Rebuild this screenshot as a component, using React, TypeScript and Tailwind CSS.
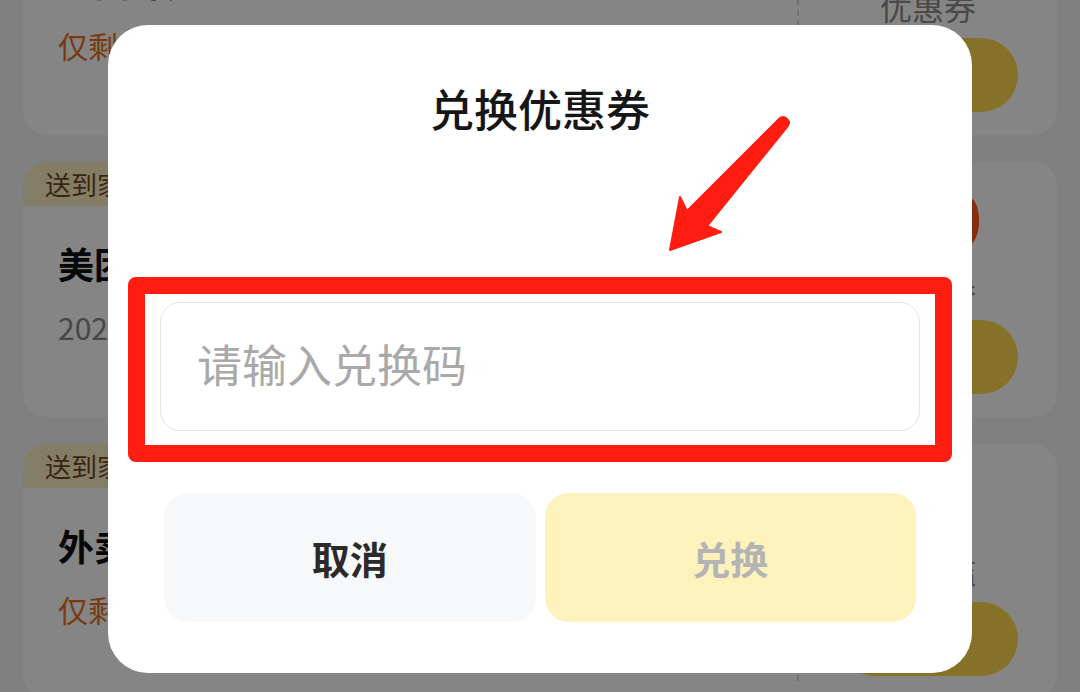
const cards = [
  { tag: "送到家", title: "美团外卖红包", sub: "仅剩1天", subClass: "text-[#e8701f]", price: "8", label: "优惠券" },
  { tag: "送到家", title: "美团外卖红包", sub: "2025.06.30到期", subClass: "text-[#8a8a8a]", price: "10", label: "优惠券" },
  { tag: "送到家", title: "外卖满减红包", sub: "仅剩2天", subClass: "text-[#e8701f]", price: "5", label: "无门槛" },
];

const Card = ({ c }: { c: (typeof cards)[number] }) => {
  return (
    <div className="flex h-[255px] shrink-0 overflow-hidden rounded-[24px] bg-white">
      <div className="flex flex-1 flex-col">
        <div className="h-[44px] w-fit rounded-br-[16px] bg-[#fdefc4] px-[22px] text-[26px] leading-[44px] text-[#6b4a1f]">{c.tag}</div>
        <div className="mt-[35px] pl-[35px] text-[36px] font-bold leading-[44px] text-[#111]">{c.title}</div>
        <div className={"mt-[22px] pl-[35px] text-[30px] leading-[40px] " + c.subClass}>{c.sub}</div>
      </div>
      <div className="my-[18px] w-0 border-l-2 border-dashed border-[#d6d6d6]" />
      <div className="flex w-[258px] flex-col items-center pt-[18px]">
        <div className="flex items-baseline font-bold leading-[72px] text-[#ff5a1a]">
          <span className="text-[40px]">¥</span>
          <span className="text-[72px]">{c.price}</span>
        </div>
        <div className="mt-[4px] text-[32px] leading-[36px] text-[#8c8c8c]">{c.label}</div>
        <div className="mt-[14px] flex h-[74px] w-[180px] items-center justify-center rounded-full bg-[#ffdb4d] text-[28px] font-semibold text-[#111]">去使用</div>
      </div>
    </div>
  );
};

const App = () => {
  return (
    <div className="relative h-[692px] w-full overflow-hidden bg-[#f5f5f5] font-['Noto_Sans_CJK_SC','Noto_Sans',sans-serif]">
      {/* page behind the dialog */}
      <div className="-mt-[120px] flex flex-col gap-[27px] px-[23px]">
        {cards.map((c, i) => (
          <Card key={i} c={c} />
        ))}
      </div>

      <div className="absolute inset-0 bg-black/[0.48]" />

      {/* dialog */}
      <div className="absolute inset-0 flex justify-center">
        <div className="mt-[25px] flex h-fit w-[864px] flex-col rounded-[40px] bg-white px-[52px] pb-[51px] pt-[57px]">
          <h2 className="text-center text-[44px] font-medium leading-[52px] text-[#161616]">兑换优惠券</h2>
          <div className="-mx-[32px] mt-[143px] rounded-[8px] border-[17px] border-[#ff1d12] px-[15px] pb-[14px] pt-[8px]">
            <div className="flex h-[129px] items-center rounded-[20px] border border-[#e3e3e3] px-[36px] pb-[6px]">
              <input
                placeholder="请输入兑换码"
                className="w-full bg-transparent text-[45px] leading-[56px] text-[#222] outline-none placeholder:text-[#a9a9a9]"
              />
            </div>
          </div>
          <div className="mx-[4px] mt-[31px] flex gap-[9px]">
            <button className="flex h-[129px] flex-1 items-center justify-center rounded-[24px] bg-[#f7f8fa] text-[38px] font-bold text-[#2a2a2a]">取消</button>
            <button className="flex h-[129px] flex-1 items-center justify-center rounded-[24px] bg-[#fdf2bc] text-[38px] font-bold text-[#b4b4b4]">兑换</button>
          </div>
        </div>
      </div>

      {/* annotation arrow */}
      <svg className="pointer-events-none absolute inset-0" width="1080" height="692" viewBox="0 0 1080 692">
        <path
          d="M670 250 L680 197 L687 211 L779 119 Q783 115 787 119 Q791 123 787 127 L707 226 L721 232 Z"
          fill="#ff1d12"
          stroke="#ff1d12"
          strokeWidth="2"
          strokeLinejoin="round"
        />
      </svg>
    </div>
  );
};

export default App;
